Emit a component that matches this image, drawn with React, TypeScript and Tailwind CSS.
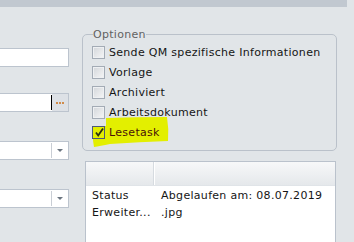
import React from "react";

const font = { fontFamily: '"DejaVu Sans", Verdana, sans-serif' };

function Box({ checked }: { checked?: boolean }) {
  if (checked) {
    return (
      <div className="relative w-[13px] h-[13px] border border-[#4d5a78] shrink-0">
        <svg className="absolute left-[1px] top-[0px]" width="11" height="11" viewBox="0 0 11 11">
          <path d="M2 5.5 L4.2 8.5 L9 1.5" fill="none" stroke="#2a3010" strokeWidth="1.8" />
        </svg>
      </div>
    );
  }
  return (
    <div className="w-[13px] h-[13px] border border-[#a3abb5] bg-gradient-to-br from-[#d3d6da] to-[#f5f6f7] shadow-[inset_0_0_0_1px_#eef0f2] shrink-0" />
  );
}

function Row({ label, checked }: { label: string; checked?: boolean }) {
  return (
    <div className="relative flex items-center h-[20px] gap-[4px]">
      <Box checked={checked} />
      <span className={checked ? "text-[#4a1208]" : "text-[#151515]"}>{label}</span>
    </div>
  );
}

function Dropdown() {
  return (
    <div className="ml-[-1px] w-[70px] h-[19px] border border-[#bcc4ce] bg-white flex">
      <div className="flex-1" />
      <div className="w-px my-[1px] bg-[#c9ced5]" />
      <div className="w-[16px] flex items-center justify-center">
        <svg width="6" height="4" viewBox="0 0 6 4">
          <path d="M0 0 H6 L3 3 Z" fill="#6b7580" />
        </svg>
      </div>
    </div>
  );
}

export default function App() {
  return (
    <div className="relative w-[354px] h-[242px] bg-[#e1e5e8] overflow-hidden text-[11px] leading-[13px] tracking-[0.3px]" style={font}>
      <svg className="absolute left-0 top-0 pointer-events-none" width="354" height="242" viewBox="0 0 354 242">
        <path
          d="M106 118 Q135 117 167 117 Q169 129 168 141 Q140 142 110 144 Q100 146 94 147 Q92 136 93 127 Q100 126 106 126 Z"
          fill="#e3ef00"
        />
      </svg>
      <div className="h-[7px] w-[347px] bg-[#c1c8d0]" />
      <div className="flex">
        <div className="w-[69px] flex flex-col">
          <div className="mt-[41px] ml-[-1px] w-[70px] h-[19px] border border-[#bcc4ce] bg-white" />
          <div className="mt-[26px] ml-[-1px] w-[70px] h-[19px] border border-[#bcc4ce] bg-white flex">
            <div className="flex-1" />
            <div className="w-px my-[1px] bg-black" />
            <div className="w-[16px] bg-[#dde1e6] flex items-center justify-center gap-[1px] pt-[1px]">
              <span className="w-[2px] h-[2px] bg-[#d08c4c]" />
              <span className="w-[2px] h-[2px] bg-[#d08c4c]" />
              <span className="w-[2px] h-[2px] bg-[#d08c4c]" />
            </div>
          </div>
          <div className="mt-[29px]">
            <Dropdown />
          </div>
          <div className="mt-[29px]">
            <Dropdown />
          </div>
        </div>
        <div className="ml-[13px] w-[255px] flex flex-col">
          <div className="relative mt-[27px] border border-[#bac1ca] rounded-[5px] pl-[9px] pt-[7px] pb-[8px]">
            <span className="absolute left-[10px] top-[-7px] bg-[#e1e5e8] text-[#626262]">Optionen</span>
            <Row label="Sende QM spezifische Informationen" />
            <Row label="Vorlage" />
            <Row label="Archiviert" />
            <Row label="Arbeitsdokument" />
            <Row label="Lesetask" checked />
          </div>
          <div className="mt-[10px] ml-[3px] w-[251px] h-[90px] border border-[#bac2cc] bg-white">
            <div className="h-[24px] flex bg-gradient-to-b from-[#f7f8f9] to-[#e5e8eb] border-b border-[#e0e4e8]">
              <div className="w-[68px] border-r border-[#d6dbe0]" />
              <div className="flex-1 border-l border-white" />
            </div>
            <div className="pt-[1px] text-[#151515] leading-[17px]">
              <div className="flex">
                <div className="w-[68px] pl-[6px]">Status</div>
                <div className="pl-[7px]">Abgelaufen am: 08.07.2019</div>
              </div>
              <div className="flex">
                <div className="w-[68px] pl-[6px]">Erweiter...</div>
                <div className="pl-[7px]">.jpg</div>
              </div>
            </div>
          </div>
        </div>
      </div>
    </div>
  );
}
